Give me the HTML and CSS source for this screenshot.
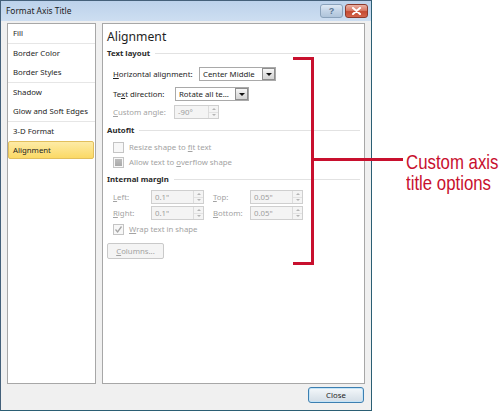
FILE: index.html
```html
<!DOCTYPE html>
<html>
<head>
<meta charset="utf-8">
<link rel="stylesheet" href="styles.css">
</head>
<body>
<div class="window">
  <div class="titlebar">
    <span class="title">Format Axis Title</span>
    <div class="tb-btns">
      <div class="tb-help">?</div>
      <div class="tb-close"><svg width="11" height="8" viewBox="0 0 11 8"><path d="M2 1 L9 7 M9 1 L2 7" stroke="#fff" stroke-width="2" stroke-linecap="round"/></svg></div>
    </div>
  </div>
  <div class="client">
    <div class="panels">
      <ul class="nav">
        <li class="group"><div class="item">Fill</div></li>
        <li class="group"><div class="item">Border Color</div><div class="item">Border Styles</div></li>
        <li class="group"><div class="item">Shadow</div><div class="item">Glow and Soft Edges</div></li>
        <li class="group last"><div class="item">3-D Format</div><div class="item sel">Alignment</div></li>
      </ul>
      <div class="pane">
        <h1 class="pane-title">Alignment</h1>
        <div class="sect s-layout"><span>Text layout</span><i></i></div>
        <div class="row r-h">
          <span class="lbl w86"><u>H</u>orizontal alignment:</span>
          <div class="combo w77"><span class="val">Center Middle</span><b class="dd"><i></i></b></div>
        </div>
        <div class="row r-td">
          <span class="lbl w62">Te<u>x</u>t direction:</span>
          <div class="combo w74"><span class="val">Rotate all te...</span><b class="dd"><i></i></b></div>
        </div>
        <div class="row r-ca dis">
          <span class="lbl w61"><u>C</u>ustom angle:</span>
          <div class="spin w45"><span class="val">-90°</span><b class="arrows"><i class="up"></i><i class="dn"></i></b></div>
        </div>
        <div class="sect s-autofit"><span>Autofit</span><i></i></div>
        <div class="row r-resize dis">
          <span class="cb"></span><span class="cbt">Resize shape to <u>f</u>it text</span>
        </div>
        <div class="row r-allow dis">
          <span class="cb ind"><i></i></span><span class="cbt">Allow text to <u>o</u>verflow shape</span>
        </div>
        <div class="sect s-margin"><span>Internal margin</span><i></i></div>
        <div class="row r-left dis">
          <span class="lbl w38"><u>L</u>eft:</span>
          <div class="spin w53"><span class="val">0.1"</span><b class="arrows"><i class="up"></i><i class="dn"></i></b></div>
          <span class="lbl w37 ml9"><u>T</u>op:</span>
          <div class="spin w53"><span class="val">0.05"</span><b class="arrows"><i class="up"></i><i class="dn"></i></b></div>
        </div>
        <div class="row r-right dis">
          <span class="lbl w38"><u>R</u>ight:</span>
          <div class="spin w53"><span class="val">0.1"</span><b class="arrows"><i class="up"></i><i class="dn"></i></b></div>
          <span class="lbl w37 ml9"><u>B</u>ottom:</span>
          <div class="spin w53"><span class="val">0.05"</span><b class="arrows"><i class="up"></i><i class="dn"></i></b></div>
        </div>
        <div class="row r-wrap dis">
          <span class="cb chk"><svg width="9" height="9" viewBox="0 0 9 9"><path d="M1.5 4.5 L3.6 7 L7.5 1.5" fill="none" stroke="#a6a6a6" stroke-width="1.3"/></svg></span><span class="cbt"><u>W</u>rap text in shape</span>
        </div>
        <div class="btn-cols"><u>C</u>olumns...</div>
      </div>
    </div>
    <div class="footer">
      <div class="btn-close">Close</div>
    </div>
  </div>
</div>

<div class="bracket"></div>
<div class="pointer"></div>
<div class="callout">Custom axis<br>title options</div>
</body>
</html>
```

FILE: styles.css
```css
body {
  margin: 0;
  width: 500px;
  height: 411px;
  background: #fff;
  position: relative;
  overflow: hidden;
  font-family: "Noto Sans", "Liberation Sans", sans-serif;
  font-size: 7.8px;
  color: #1e1e1e;
}

.window {
  width: 372px;
  height: 411px;
  box-sizing: border-box;
  border: 1px solid #44607a;
  border-right-color: #2b5f74;
  border-bottom-color: #2b5f74;
  background: #f0f0f0;
  display: flex;
  flex-direction: column;
}

.titlebar {
  height: 20px;
  flex: none;
  display: flex;
  align-items: flex-start;
  justify-content: space-between;
  background: linear-gradient(#bcd2eb, #cddef1);
  padding: 0 3px 0 5px;
}
.title {
  line-height: 20px;
  font-size: 8.4px;
  color: #1a1a1a;
}
.tb-btns {
  display: flex;
  gap: 2px;
  margin-top: 3px;
}
.tb-help, .tb-close {
  width: 23px;
  height: 14px;
  box-sizing: border-box;
  border-radius: 3px;
  display: flex;
  align-items: center;
  justify-content: center;
}
.tb-help {
  border: 1px solid #8aa2bb;
  background: linear-gradient(#dfe9f4, #c2d3e6 50%, #afc4da);
  color: #5a7491;
  font-family: "Liberation Sans", sans-serif;
  font-weight: bold;
  font-size: 9px;
}
.tb-close {
  border: 1px solid #8d3a2c;
  background: linear-gradient(#eab2a5, #d87a66 45%, #c44a32 55%, #d4654c);
}

.client {
  flex: 1;
  display: flex;
  flex-direction: column;
  padding: 2px 6px 0 6px;
}
.panels {
  display: flex;
  gap: 6px;
  height: 361px;
  flex: none;
}

.nav {
  width: 89px;
  box-sizing: border-box;
  border: 1px solid #a7a7a7;
  background: #fff;
  margin: 0;
  padding: 0;
  list-style: none;
}
.group {
  border-bottom: 1px solid #e6e6e6;
}
.group.last {
  border-bottom: none;
}
.item {
  height: 19px;
  line-height: 19px;
  padding-left: 5px;
  white-space: nowrap;
}
.item.sel {
  height: 18px;
  line-height: 16px;
  box-sizing: border-box;
  border: 1px solid #e2bf5c;
  border-radius: 2px;
  background: linear-gradient(#fdeba6, #fbd965);
  padding-left: 4px;
  margin: 0 1px 0 0;
}

.pane {
  width: 263px;
  box-sizing: border-box;
  border: 1px solid #a7a7a7;
  background: #fff;
  padding: 4px 4px 0 4px;
  display: flex;
  flex-direction: column;
}
.pane-title {
  margin: 0;
  font-size: 12.2px;
  font-weight: normal;
  line-height: 18px;
  color: #1e1e1e;
}
.sect {
  display: flex;
  align-items: center;
  height: 12px;
  font-weight: bold;
  color: #2a2a2a;
  white-space: nowrap;
}
.sect i {
  flex: 1;
  height: 1px;
  background: #e2e2e2;
  margin-left: 5px;
}
.s-layout { margin-top: 1px; }
.s-autofit { margin-top: 5px; }
.s-margin { margin-top: 4px; }

.row {
  display: flex;
  align-items: center;
  height: 14px;
  padding-left: 6px;
  white-space: nowrap;
}
.r-h { margin-top: 8px; }
.r-td { margin-top: 6px; }
.r-ca { margin-top: 4px; }
.r-resize { margin-top: 4px; }
.r-allow { margin-top: 1px; }
.r-left { margin-top: 5px; }
.r-right { margin-top: 2px; }
.r-wrap { margin-top: 2px; }

.dis { color: #a3a3a3; }

.lbl { flex: none; }
.w86 { width: 86px; }
.w62 { width: 62px; }
.w61 { width: 61px; }
.w38 { width: 38px; }
.w37 { width: 37px; }
.ml9 { margin-left: 9px; }
.w77 { width: 77px; }
.w74 { width: 74px; }
.w45 { width: 45px; }
.w53 { width: 53px; }

.combo, .spin {
  height: 14px;
  box-sizing: border-box;
  display: flex;
  align-items: center;
  justify-content: space-between;
  flex: none;
}
.combo {
  border: 1px solid #a9a9a9;
  background: #fff;
  color: #1e1e1e;
}
.val {
  padding-left: 3px;
  overflow: hidden;
}
.dd {
  width: 13px;
  height: 12px;
  box-sizing: border-box;
  border: 1px solid #8e8e8e;
  background: linear-gradient(#f7f7f7, #e2e2e2 50%, #d4d4d4);
  display: flex;
  align-items: center;
  justify-content: center;
}
.dd i {
  width: 0;
  height: 0;
  border-left: 3px solid transparent;
  border-right: 3px solid transparent;
  border-top: 3px solid #111;
}

.spin {
  border: 1px solid #cfcfcf;
  background: #f4f4f4;
  color: #9e9e9e;
}
.arrows {
  width: 9px;
  height: 12px;
  border-left: 1px solid #dcdcdc;
  display: flex;
  flex-direction: column;
}
.arrows i {
  flex: 1;
  display: flex;
  align-items: center;
  justify-content: center;
}
.arrows i.up { border-bottom: 1px solid #e2e2e2; }
.arrows i::before {
  content: "";
  width: 0;
  height: 0;
  border-left: 2px solid transparent;
  border-right: 2px solid transparent;
}
.arrows i.up::before { border-bottom: 2px solid #b4b4b4; }
.arrows i.dn::before { border-top: 2px solid #b4b4b4; }

.cb {
  width: 11px;
  height: 11px;
  box-sizing: border-box;
  border: 1px solid #c4c4c4;
  background: #f7f7f7;
  flex: none;
  display: flex;
  align-items: center;
  justify-content: center;
}
.cb.ind i {
  width: 7px;
  height: 7px;
  background: linear-gradient(#bdbdbd, #a9a9a9);
}
.cbt {
  margin-left: 5px;
}

.btn-cols {
  margin-top: 7px;
  width: 57px;
  height: 16px;
  box-sizing: border-box;
  border: 1px solid #c9c9c9;
  border-radius: 2px;
  background: #f4f4f4;
  color: #a3a3a3;
  display: flex;
  align-items: center;
  justify-content: center;
}

.footer {
  flex: 1;
  display: flex;
  justify-content: flex-end;
  align-items: flex-start;
  padding-top: 3px;
  padding-right: 1px;
}
.btn-close {
  width: 56px;
  height: 16px;
  box-sizing: border-box;
  border: 1px solid #3c7fb1;
  border-radius: 3px;
  background: linear-gradient(#f4f8fb, #e3eaf0 50%, #d3dde6);
  box-shadow: inset 0 0 0 1px #c5e4f7;
  display: flex;
  align-items: center;
  justify-content: center;
  color: #1e1e1e;
}

.bracket {
  position: absolute;
  left: 293px;
  top: 57px;
  width: 18px;
  height: 202px;
  border: 3px solid #c8102e;
  border-left: none;
}
.pointer {
  position: absolute;
  left: 313px;
  top: 158px;
  width: 90px;
  height: 3px;
  background: #c8102e;
}
.callout {
  position: absolute;
  left: 406px;
  top: 151px;
  font-family: "Liberation Sans", sans-serif;
  font-size: 21px;
  line-height: 21px;
  color: #c8102e;
  white-space: nowrap;
  transform: scaleX(0.8);
  transform-origin: left top;
}
```
